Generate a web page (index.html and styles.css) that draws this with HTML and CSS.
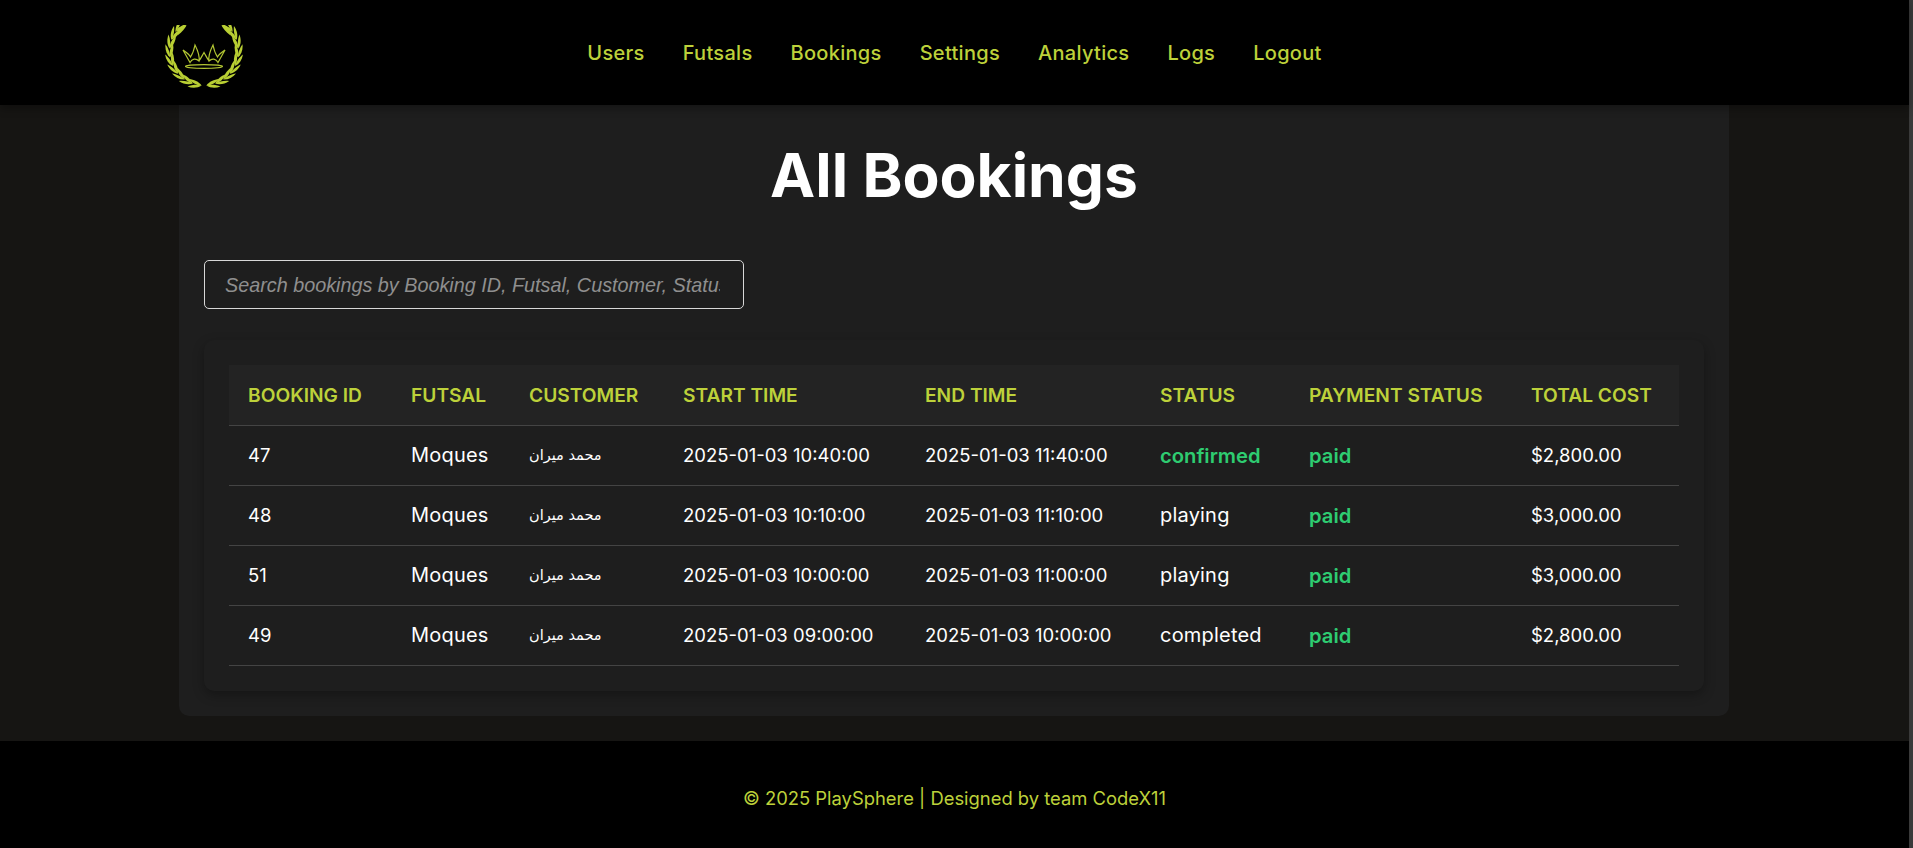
FILE: index.html
```html
<!DOCTYPE html>
<html lang="en">
<head>
<meta charset="utf-8">
<title>All Bookings</title>
<link rel="stylesheet" href="styles.css">
</head>
<body>
<div class="page">
  <header class="navbar">
    <div class="logo-cell">
      <svg class="logo" viewBox="0 0 78 63" aria-label="PlaySphere logo">
        <defs>
          <g id="leaf">
            <path d="M39 60.5C35 63.500 30 64 25 62.5C29 60.500 35 59.500 39 60.5Z"/>
            <path d="M39 60.5C36 57 31 55 26 55C29 58.5 34 61 39 60.5Z"/>
          </g>
          <g id="branch">
            <use href="#leaf" transform="rotate(4 39 26)"/>
            <use href="#leaf" transform="rotate(19 39 26)"/>
            <use href="#leaf" transform="rotate(34 39 26)"/>
            <use href="#leaf" transform="rotate(49 39 26)"/>
            <use href="#leaf" transform="rotate(64 39 26)"/>
            <use href="#leaf" transform="rotate(79 39 26)"/>
            <use href="#leaf" transform="rotate(94 39 26)"/>
            <use href="#leaf" transform="rotate(109 39 26)"/>
            <use href="#leaf" transform="rotate(124 39 26)"/>
            <path d="M13 3C17 1.500 20 1 21.500 .5C20 3.500 17 7 13 10Z"/>
          </g>
        </defs>
        <g class="logo-fill">
          <use href="#branch"/>
          <use href="#branch" transform="matrix(-1 0 0 1 78 0)"/>
        </g>
        <path class="logo-line" d="M18 25L25 37.500C27 33.500 31 33 34 36C35 31 33 26 30 20C29 25 27.500 29 25.500 32C24 29 21 27 18 25ZM60 25L53 37.500C51 33.500 47 33 44 36C43 31 45 26 48 20C49 25 50.500 29 52.500 32C54 29 57 27 60 25ZM34 36C35.500 34 37 31 39 27.500C41 31 42.500 34 44 36"/>
        <ellipse class="logo-line" cx="39" cy="41.500" rx="18.500" ry="1.800"/>
      </svg>
    </div>
    <nav class="nav-links">
      <a href="#">Users</a>
      <a href="#">Futsals</a>
      <a href="#">Bookings</a>
      <a href="#">Settings</a>
      <a href="#">Analytics</a>
      <a href="#">Logs</a>
      <a href="#">Logout</a>
    </nav>
  </header>

  <main class="content">
    <section class="panel">
      <h1 class="title">All Bookings</h1>
      <input class="search" type="text" placeholder="Search bookings by Booking ID, Futsal, Customer, Status, Payment Status">
      <div class="table-card">
        <table class="bookings">
          <colgroup>
            <col class="c1"><col class="c2"><col class="c3"><col class="c4">
            <col class="c5"><col class="c6"><col class="c7"><col class="c8">
          </colgroup>
          <thead>
            <tr>
              <th>Booking ID</th><th>Futsal</th><th>Customer</th><th>Start Time</th>
              <th>End Time</th><th>Status</th><th>Payment Status</th><th>Total Cost</th>
            </tr>
          </thead>
          <tbody>
            <tr>
              <td>47</td><td class="word">Moques</td><td class="ar">محمد میران</td><td>2025-01-03 10:40:00</td>
              <td>2025-01-03 11:40:00</td><td class="word ok">confirmed</td><td class="word ok">paid</td><td>$2,800.00</td>
            </tr>
            <tr>
              <td>48</td><td class="word">Moques</td><td class="ar">محمد میران</td><td>2025-01-03 10:10:00</td>
              <td>2025-01-03 11:10:00</td><td class="word">playing</td><td class="word ok">paid</td><td>$3,000.00</td>
            </tr>
            <tr>
              <td>51</td><td class="word">Moques</td><td class="ar">محمد میران</td><td>2025-01-03 10:00:00</td>
              <td>2025-01-03 11:00:00</td><td class="word">playing</td><td class="word ok">paid</td><td>$3,000.00</td>
            </tr>
            <tr>
              <td>49</td><td class="word">Moques</td><td class="ar">محمد میران</td><td>2025-01-03 09:00:00</td>
              <td>2025-01-03 10:00:00</td><td class="word">completed</td><td class="word ok">paid</td><td>$2,800.00</td>
            </tr>
          </tbody>
        </table>
      </div>
    </section>
  </main>

  <footer class="footer">© 2025 PlaySphere | Designed by team CodeX11</footer>
</div>
<div class="scrollbar"></div>
</body>
</html>
```
FILE: styles.css
```css
* { box-sizing: border-box; }
html, body { margin: 0; height: 100%; }
body {
  display: flex;
  overflow: hidden;
  background: #161513;
  color: #fff;
  font-family: Inter, "Noto Sans", sans-serif;
}
.page {
  flex: 1;
  min-width: 0;
  display: flex;
  flex-direction: column;
  height: 848px;
}
.scrollbar { width: 4px; background: #3a3a3a; }

.navbar {
  position: relative;
  z-index: 2;
  height: 105px;
  flex: none;
  display: grid;
  grid-template-columns: 1fr auto 1fr;
  align-items: start;
  background: #000;
  box-shadow: 0 4px 8px rgba(0, 0, 0, .3);
}
.logo-cell { padding: 25px 0 0 165px; }
.logo { display: block; width: 78px; height: 63px; }
.logo-fill { fill: #b9cf33; }
.logo-line { fill: none; stroke: #b0c432; stroke-width: 1.2; }
.nav-links { display: flex; gap: 38px; padding-top: 40px; }
.nav-links a {
  color: #bdd13a;
  text-decoration: none;
  font-size: 20px;
  font-weight: 500;
  line-height: 26px;
  letter-spacing: .3px;
}

.content { flex: 1; padding: 0 180px 25px 179px; display: flex; }
.panel {
  flex: 1;
  background: #1e1e1e;
  border-radius: 0 0 10px 10px;
  padding: 25px 25px 25px;
  display: flex;
  flex-direction: column;
  align-items: flex-start;
}
.title {
  align-self: stretch;
  margin: 0 0 40px;
  text-align: center;
  font-size: 60.500px;
  font-weight: 700;
  line-height: 90px;
}
.search {
  width: 540px;
  height: 49px;
  padding: 1px 23px 0 20px;
  background: transparent;
  border: 1px solid #d8d8d8;
  border-radius: 5px;
  color: #fff;
  font: italic 19.800px "Liberation Sans", Arial, sans-serif;
}
.search::placeholder { color: #8f8f8f; opacity: 1; }
.table-card {
  align-self: stretch;
  margin-top: 31px;
  padding: 25px;
  background: #1e1e1e;
  border-radius: 10px;
  box-shadow: 0 4px 12px rgba(0, 0, 0, .3);
}
.bookings { width: 100%; table-layout: fixed; border-collapse: collapse; }
.c1 { width: 163px; } .c2 { width: 118px; } .c3 { width: 154px; } .c4 { width: 242px; }
.c5 { width: 235px; } .c6 { width: 149px; } .c7 { width: 222px; } .c8 { width: 167px; }
th, td {
  padding: 0 0 0 19px;
  text-align: left;
  white-space: nowrap;
  border-bottom: 1px solid #444;
}
th {
  height: 60px;
  background: #232323;
  color: #bdd13a;
  font-size: 19.200px;
  font-weight: 600;
  text-transform: uppercase;
}
td { height: 60px; font-size: 18.500px; color: #fff; }
td.word { font-size: 20px; letter-spacing: .2px; }
td.ar { font-family: "DejaVu Sans", sans-serif; font-size: 14.500px; }
td.ok { color: #2ecc71; font-weight: 600; font-size: 20.200px; letter-spacing: 0; }

.footer {
  flex: none;
  height: 107px;
  padding-top: 6px;
  display: flex;
  align-items: center;
  justify-content: center;
  background: #000;
  color: #bdd13a;
  font-size: 18.400px;
}
```
